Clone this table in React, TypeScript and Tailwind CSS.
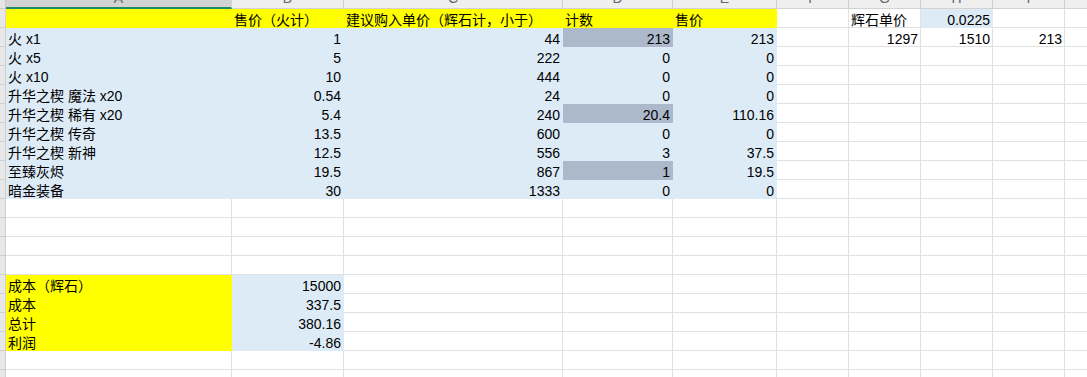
type Fill = "y" | "b" | "g";
type Cell = { t?: string; r?: boolean; f?: Fill };

// column widths (incl. 1px gridline), row header first
const COL_W = [
  "w-[226px]",
  "w-[112px]",
  "w-[219px]",
  "w-[110px]",
  "w-[104px]",
  "w-[72px]",
  "w-[72px]",
  "w-[72px]",
  "w-[72px]",
  "w-[72px]",
];
const LETTERS = ["A", "B", "C", "D", "E", "F", "G", "H", "I", "J"];

const FILL: Record<Fill, string> = {
  y: "bg-[#ffff00] border-[#ffff00]",
  b: "bg-[#ddebf7] border-[#ddebf7]",
  g: "bg-[#acb9ca] border-[#acb9ca]",
};

const item = (a: string, b: string, c: string, d: string, e: string, gray = false): Cell[] => [
  { t: a, f: "b" },
  { t: b, r: true, f: "b" },
  { t: c, r: true, f: "b" },
  { t: d, r: true, f: gray ? "g" : "b" },
  { t: e, r: true, f: "b" },
];

const total = (label: string, v: string): Cell[] => [
  { t: label, f: "y" },
  { t: v, r: true, f: "b" },
];

const ROWS: Cell[][] = [
  [
    { f: "y" },
    { t: "售价（火计）", f: "y" },
    { t: "建议购入单价（辉石计，小于）", f: "y" },
    { t: "计数", f: "y" },
    { t: "售价", f: "y" },
    {},
    { t: "辉石单价" },
    { t: "0.0225", r: true, f: "b" },
  ],
  [...item("火 x1", "1", "44", "213", "213", true), {}, { t: "1297", r: true }, { t: "1510", r: true }, { t: "213", r: true }],
  item("火 x5", "5", "222", "0", "0"),
  item("火 x10", "10", "444", "0", "0"),
  item("升华之楔 魔法 x20", "0.54", "24", "0", "0"),
  item("升华之楔 稀有 x20", "5.4", "240", "20.4", "110.16", true),
  item("升华之楔 传奇", "13.5", "600", "0", "0"),
  item("升华之楔 新神", "12.5", "556", "3", "37.5"),
  item("至臻灰烬", "19.5", "867", "1", "19.5", true),
  item("暗金装备", "30", "1333", "0", "0"),
  [],
  [],
  [],
  [],
  total("成本（辉石）", "15000"),
  total("成本", "337.5"),
  total("总计", "380.16"),
  total("利润", "-4.86"),
  [],
  [],
];

function ColumnHeader() {
  return (
    <div className="flex h-[9px]">
      <div className="w-[6px] shrink-0 border-r border-b border-[#c9c9c9] bg-[#e6e6e6]" />
      {LETTERS.map((l, i) => (
        <div
          key={l}
          className={`${COL_W[i]} shrink-0 flex justify-center items-start overflow-hidden border-r ${
            i === 0
              ? "bg-[#d3d3d3] border-r-[#d3d3d3] border-b-2 border-b-[#1e8a64]"
              : "bg-[#efefef] border-r-[#cfcfcf] border-b border-b-[#d2d2d2]"
          }`}
        >
          <span className="-mt-[9px] text-[14px] leading-[14px] text-[#666]">{l}</span>
        </div>
      ))}
    </div>
  );
}

function Row({ cells }: { cells: Cell[] }) {
  return (
    <div className="flex h-[19px]">
      <div className="w-[6px] shrink-0 border-r border-b border-[#cfcfcf] bg-[#e8e8e8]" />
      {COL_W.map((w, i) => {
        const c = cells[i] ?? {};
        return (
          <div
            key={i}
            className={`${w} shrink-0 flex items-end overflow-hidden whitespace-nowrap border-r border-b ${
              c.f ? FILL[c.f] : "bg-white border-[#e1e1e1]"
            } ${c.r ? "justify-end pr-[2px]" : "justify-start pl-[2px]"}`}
          >
            <span className="text-[14px] leading-[14px] text-black">{c.t}</span>
          </div>
        );
      })}
    </div>
  );
}

export default function App() {
  return (
    <div
      className="w-[1087px] h-[377px] overflow-hidden bg-white"
      style={{ fontFamily: '"Liberation Sans", "Noto Sans CJK SC", Arial, sans-serif' }}
    >
      <ColumnHeader />
      {ROWS.map((cells, i) => (
        <Row key={i} cells={cells} />
      ))}
    </div>
  );
}
